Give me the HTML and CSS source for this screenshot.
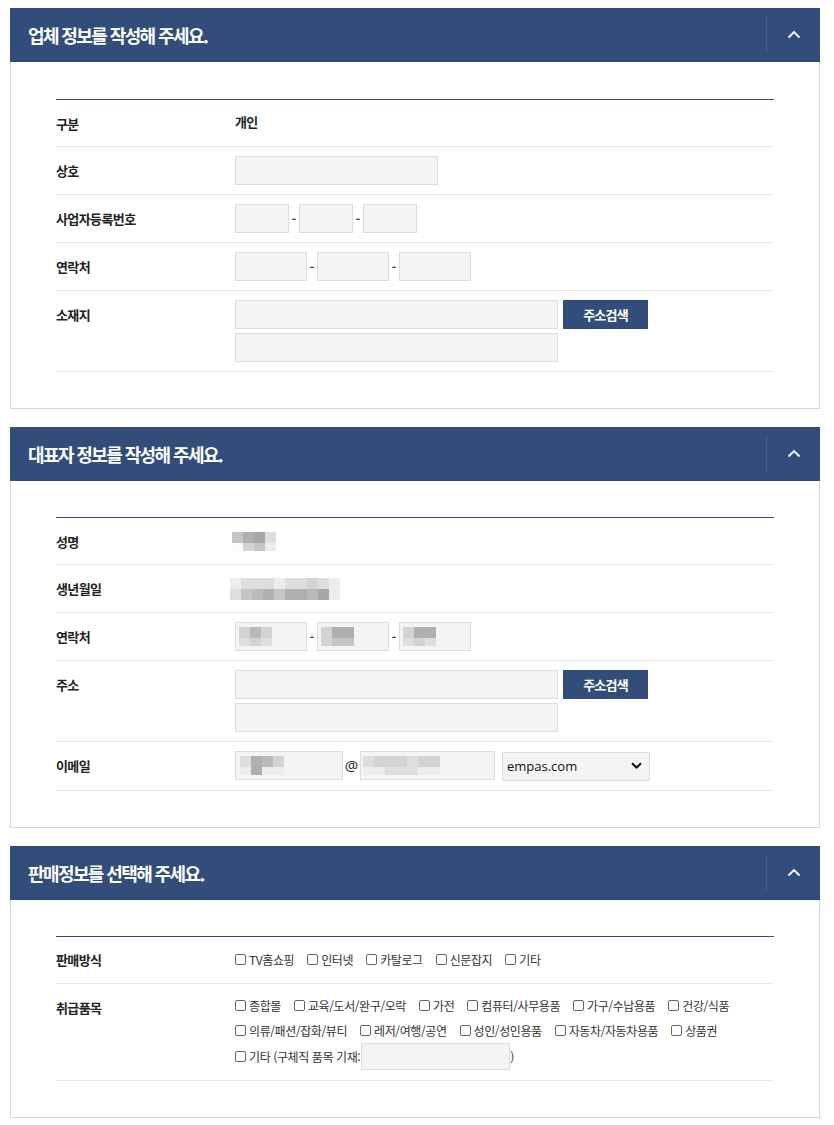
FILE: index.html
```html
<!DOCTYPE html>
<html lang="ko">
<head>
    <meta charset="UTF-8">
    <meta name="viewport" content="width=device-width, initial-scale=1.0">
    <title>입점 신청</title>
    <link rel="stylesheet" href="styles.css">
</head>
<body>
    <!-- 업체 정보 -->
    <div class="panel">
        <div class="panel-head">
            <h2>업체 정보를 작성해 주세요.</h2>
            <span class="toggle">
                <svg width="14" height="9" viewBox="0 0 14 9"><path d="M1.5 7.5 L7 2 L12.5 7.5" fill="none" stroke="#fff" stroke-width="1.8"/></svg>
            </span>
        </div>
        <div class="panel-body first">
            <div class="form-table">
                <div class="row">
                    <div class="label">구분</div>
                    <div class="value"><span class="plain">개인</span></div>
                </div>
                <div class="row">
                    <div class="label">상호</div>
                    <div class="value"><input type="text" class="inp w-name"></div>
                </div>
                <div class="row">
                    <div class="label">사업자등록번호</div>
                    <div class="value line">
                        <input type="text" class="inp w-biz"><span class="dash">-</span><input type="text" class="inp w-biz"><span class="dash">-</span><input type="text" class="inp w-biz">
                    </div>
                </div>
                <div class="row">
                    <div class="label">연락처</div>
                    <div class="value line">
                        <input type="text" class="inp w-tel"><span class="dash">-</span><input type="text" class="inp w-tel"><span class="dash">-</span><input type="text" class="inp w-tel">
                    </div>
                </div>
                <div class="row">
                    <div class="label">소재지</div>
                    <div class="value stack">
                        <div class="line"><input type="text" class="inp w-addr"><button class="btn">주소검색</button></div>
                        <div class="line"><input type="text" class="inp w-addr"></div>
                    </div>
                </div>
            </div>
        </div>
    </div>

    <!-- 대표자 정보 -->
    <div class="panel">
        <div class="panel-head">
            <h2>대표자 정보를 작성해 주세요.</h2>
            <span class="toggle">
                <svg width="14" height="9" viewBox="0 0 14 9"><path d="M1.5 7.5 L7 2 L12.5 7.5" fill="none" stroke="#fff" stroke-width="1.8"/></svg>
            </span>
        </div>
        <div class="panel-body">
            <div class="form-table">
                <div class="row">
                    <div class="label">성명</div>
                    <div class="value">
                        <span class="mosaic name">
                            <i class="c4"></i><i class="c6"></i><i class="c7"></i><i class="c2"></i>
                            <i class="c0"></i><i class="c3"></i><i class="c4"></i><i class="c1"></i>
                        </span>
                    </div>
                </div>
                <div class="row">
                    <div class="label">생년월일</div>
                    <div class="value">
                        <span class="mosaic birth">
                            <i class="c1"></i><i class="c2"></i><i class="c2"></i><i class="c2"></i><i class="c1"></i><i class="c2"></i><i class="c2"></i><i class="c3"></i><i class="c2"></i><i class="c1"></i>
                            <i class="c2"></i><i class="c4"></i><i class="c5"></i><i class="c6"></i><i class="c4"></i><i class="c6"></i><i class="c6"></i><i class="c5"></i><i class="c7"></i><i class="c1"></i>
                        </span>
                    </div>
                </div>
                <div class="row">
                    <div class="label">연락처</div>
                    <div class="value line">
                        <span class="inp w-tel fake"><span class="mosaic small"><i class="c3"></i><i class="c5"></i><i class="c3"></i><i class="c2"></i><i class="c3"></i><i class="c2"></i></span></span><span class="dash">-</span><span class="inp w-tel fake"><span class="mosaic small"><i class="c3"></i><i class="c6"></i><i class="c6"></i><i class="c3"></i><i class="c4"></i><i class="c4"></i></span></span><span class="dash">-</span><span class="inp w-tel fake"><span class="mosaic small"><i class="c3"></i><i class="c6"></i><i class="c6"></i><i class="c2"></i><i class="c3"></i><i class="c2"></i></span></span>
                    </div>
                </div>
                <div class="row">
                    <div class="label">주소</div>
                    <div class="value stack">
                        <div class="line"><input type="text" class="inp w-addr"><button class="btn">주소검색</button></div>
                        <div class="line"><input type="text" class="inp w-addr"></div>
                    </div>
                </div>
                <div class="row">
                    <div class="label">이메일</div>
                    <div class="value line">
                        <span class="inp w-mail fake"><span class="mosaic mail"><i class="c2"></i><i class="c6"></i><i class="c5"></i><i class="c3"></i><i class="c1"></i><i class="c6"></i><i class="c1"></i><i class="c1"></i></span></span><span class="at">@</span><span class="inp w-domain fake"><span class="mosaic domain"><i class="c2"></i><i class="c3"></i><i class="c3"></i><i class="c3"></i><i class="c2"></i><i class="c3"></i><i class="c3"></i><i class="c1"></i><i class="c1"></i><i class="c2"></i><i class="c2"></i><i class="c2"></i><i class="c1"></i><i class="c1"></i></span></span>
                        <span class="select-wrap">
                            <select class="sel">
                                <option>empas.com</option>
                                <option>naver.com</option>
                                <option>daum.net</option>
                                <option>직접입력</option>
                            </select>
                            <svg class="sel-arrow" width="11" height="7" viewBox="0 0 11 7"><path d="M1 1.2 L5.5 5.5 L10 1.2" fill="none" stroke="#111" stroke-width="2"/></svg>
                        </span>
                    </div>
                </div>
            </div>
        </div>
    </div>

    <!-- 판매 정보 -->
    <div class="panel">
        <div class="panel-head">
            <h2>판매정보를 선택해 주세요.</h2>
            <span class="toggle">
                <svg width="14" height="9" viewBox="0 0 14 9"><path d="M1.5 7.5 L7 2 L12.5 7.5" fill="none" stroke="#fff" stroke-width="1.8"/></svg>
            </span>
        </div>
        <div class="panel-body">
            <div class="form-table">
                <div class="row short">
                    <div class="label">판매방식</div>
                    <div class="value checks">
                        <label class="chk"><input type="checkbox">TV홈쇼핑</label>
                        <label class="chk"><input type="checkbox">인터넷</label>
                        <label class="chk"><input type="checkbox">카탈로그</label>
                        <label class="chk"><input type="checkbox">신문잡지</label>
                        <label class="chk"><input type="checkbox">기타</label>
                    </div>
                </div>
                <div class="row">
                    <div class="label">취급품목</div>
                    <div class="value checks multi">
                        <label class="chk"><input type="checkbox">종합몰</label>
                        <label class="chk"><input type="checkbox">교육/도서/완구/오락</label>
                        <label class="chk"><input type="checkbox">가전</label>
                        <label class="chk"><input type="checkbox">컴퓨터/사무용품</label>
                        <label class="chk"><input type="checkbox">가구/수납용품</label>
                        <label class="chk"><input type="checkbox">건강/식품</label>
                        <label class="chk"><input type="checkbox">의류/패션/잡화/뷰티</label>
                        <label class="chk"><input type="checkbox">레저/여행/공연</label>
                        <label class="chk"><input type="checkbox">성인/성인용품</label>
                        <label class="chk"><input type="checkbox">자동차/자동차용품</label>
                        <label class="chk"><input type="checkbox">상품권</label>
                        <label class="chk etc"><input type="checkbox">기타 (구체직 품목 기재:<input type="text" class="inp w-etc">)</label>
                    </div>
                </div>
            </div>
        </div>
    </div>
</body>
</html>
```

FILE: styles.css
```css
body {
    margin: 0;
    padding: 8px 14px 0 10px;
    background-color: #fff;
    font-family: "Noto Sans CJK KR", "Noto Sans", sans-serif;
    color: #222;
}
.panel {
    margin-bottom: 18px;
}
.panel-head {
    display: flex;
    align-items: center;
    height: 54px;
    padding-left: 18px;
    background-color: #334d7a;
    color: #fff;
}
.panel-head h2 {
    flex: 1;
    margin: 0;
    font-size: 18px;
    font-weight: bold;
    letter-spacing: -1.6px;
}
.toggle {
    display: flex;
    align-items: center;
    justify-content: center;
    width: 53px;
    height: 35px;
    margin: 0 0 1px 0;
    border-left: 1px solid #4a6290;
}
.panel-body {
    padding: 36px 45px 36px 45px;
    border: 1px solid #d6d6d6;
    border-top: none;
}
.panel-body.first {
    padding-top: 37px;
}
.form-table {
    border-top: 1px solid #334d7a;
}
.row {
    display: grid;
    grid-template-columns: 179px 1fr;
    padding: 9px 0;
    border-bottom: 1px solid #e8e8e8;
}
.row:first-child {
    padding-bottom: 8px;
}
.row.short {
    padding-top: 8px;
    padding-bottom: 9px;
}
.label {
    font-size: 13px;
    font-weight: bold;
    line-height: 29px;
    letter-spacing: -0.6px;
    color: #222;
}
.value {
    font-size: 13px;
    line-height: 29px;
}
.plain {
    font-weight: bold;
    letter-spacing: -0.6px;
    position: relative;
    top: -2px;
}
.line {
    display: flex;
    align-items: center;
}
.stack {
    display: flex;
    flex-direction: column;
    gap: 4px;
}
.inp {
    box-sizing: border-box;
    height: 29px;
    margin: 0;
    padding: 0 4px;
    background-color: #f4f4f4;
    border: 1px solid #dcdcdc;
    font-family: inherit;
    font-size: 13px;
    outline: none;
}
.fake {
    display: flex;
    align-items: center;
}
.w-name { width: 203px; }
.w-biz { width: 54px; }
.w-tel { width: 72px; }
.w-addr { width: 323px; }
.w-mail { width: 108px; }
.w-domain { width: 135px; }
.w-etc { width: 149px; height: 27px; margin-left: 1px; }
.dash {
    width: 10px;
    text-align: center;
    font-size: 12px;
    font-weight: bold;
    color: #333;
}
.at {
    width: 17px;
    text-align: center;
    font-size: 15px;
    color: #222;
    font-family: "Open Sans", sans-serif;
}
.btn {
    width: 85px;
    height: 29px;
    margin-left: 5px;
    border: none;
    background-color: #334d7a;
    color: #fff;
    font-family: inherit;
    font-size: 13px;
    font-weight: bold;
    letter-spacing: -0.8px;
    cursor: pointer;
}
.select-wrap {
    position: relative;
    display: inline-block;
    margin-left: 7px;
}
.sel {
    box-sizing: border-box;
    appearance: none;
    -webkit-appearance: none;
    width: 148px;
    height: 29px;
    padding: 0 0 0 4px;
    background-color: #f4f4f4;
    border: 1px solid #dcdcdc;
    border-radius: 0;
    font-family: "Open Sans", sans-serif;
    font-size: 13px;
    color: #111;
}
.sel-arrow {
    position: absolute;
    right: 8px;
    top: 11px;
    pointer-events: none;
}

/* blurred private values */
.mosaic {
    display: inline-grid;
    grid-auto-rows: 11px 8px;
    vertical-align: middle;
}
.mosaic i {
    display: block;
}
.mosaic.name {
    grid-template-columns: repeat(4, 11px);
    margin-left: -3px;
    position: relative;
    top: -2px;
}
.mosaic.birth {
    grid-template-columns: repeat(10, 11px);
    grid-auto-rows: 11px 11px;
    margin-left: -5px;
    position: relative;
    top: -1px;
}
.mosaic.small {
    grid-template-columns: repeat(3, 11px);
    margin-left: -1px;
}
.mosaic.mail {
    grid-template-columns: repeat(4, 11px);
}
.mosaic.domain {
    grid-template-columns: repeat(7, 11px);
    margin-left: -2px;
}
.c0 { background-color: #fbfbfb; }
.c1 { background-color: #ececee; }
.c2 { background-color: #dfdedd; }
.c3 { background-color: #d4d3d3; }
.c4 { background-color: #c6c4c4; }
.c5 { background-color: #bab9b7; }
.c6 { background-color: #b0afaf; }
.c7 { background-color: #a7a7a7; }

/* checkbox lists */
.checks {
    display: flex;
    flex-wrap: wrap;
    column-gap: 13px;
    line-height: 27px;
}
.checks.multi {
    line-height: 25px;
}
.chk {
    display: inline-flex;
    align-items: center;
    font-size: 12px;
    letter-spacing: -0.4px;
    color: #333;
}
.chk input[type="checkbox"] {
    appearance: none;
    -webkit-appearance: none;
    width: 11px;
    height: 11px;
    margin: 0 3px 0 0;
    border: 1px solid #666;
    border-radius: 2px;
    background-color: #fff;
}
.chk.etc {
    flex-basis: 100%;
    height: 28px;
}
```
